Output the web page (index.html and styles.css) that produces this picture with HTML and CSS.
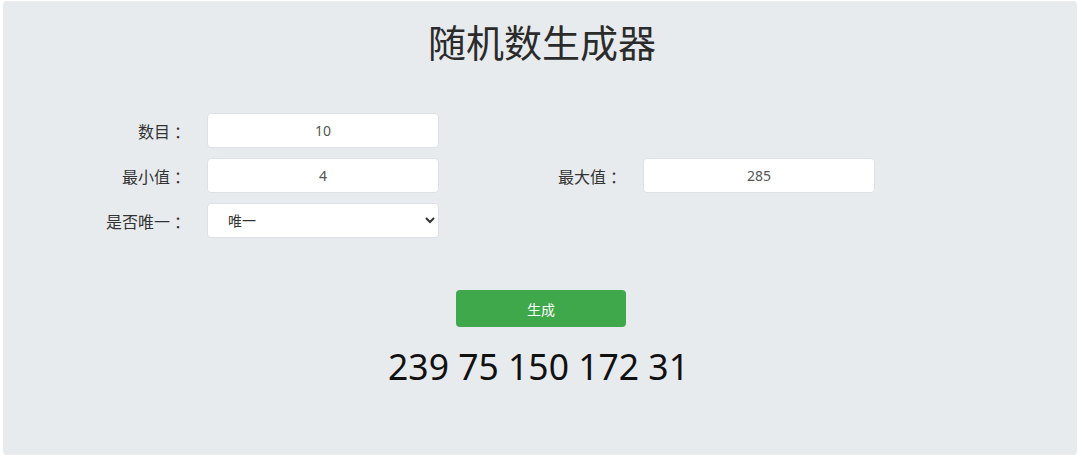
FILE: index.html
```html
<!DOCTYPE html>
<html lang="zh">
<head>
<meta charset="utf-8">
<title>随机数生成器</title>
<link rel="stylesheet" href="styles.css">
</head>
<body>
<div class="panel">
  <h1 class="title">随机数生成器</h1>
  <div class="form">
    <label class="label">数目<span class="colon">：</span></label>
    <input class="field" type="text" value="10">
    <div class="empty"></div>
    <div class="empty"></div>

    <label class="label">最小值<span class="colon">：</span></label>
    <input class="field" type="text" value="4">
    <label class="label">最大值<span class="colon">：</span></label>
    <input class="field" type="text" value="285">

    <label class="label">是否唯一<span class="colon">：</span></label>
    <select class="field select">
      <option>唯一</option>
      <option>不唯一</option>
    </select>
  </div>
  <div class="actions">
    <button class="btn" type="button">生成</button>
  </div>
  <div class="result">239 75 150 172 31</div>
</div>
</body>
</html>
```

FILE: styles.css
```css
html, body {
  margin: 0;
  padding: 0;
  background: #ffffff;
}
body {
  font-family: "Noto Sans", "Noto Sans CJK SC", sans-serif;
  padding: 1px 3px 2px 3px;
}
.panel {
  background: #e8ebee;
  border-radius: 4px;
  height: 454px;
  box-sizing: border-box;
  padding-top: 16px;
}
.title {
  margin: 0;
  padding-left: 4px;
  font-size: 38px;
  line-height: 48px;
  font-weight: 400;
  color: #2b2b2b;
  text-align: center;
  font-family: "Noto Sans CJK SC", sans-serif;
}
.form {
  margin-top: 48px;
  display: grid;
  grid-template-columns: 204px 232px 204px 232px;
  grid-auto-rows: 35px;
  row-gap: 10px;
}
.label {
  align-self: center;
  text-align: right;
  padding-right: 17px;
  font-size: 16px;
  color: #333;
  font-family: "Noto Sans CJK SC", sans-serif;
}
.colon {
  margin-left: 4px;
}
.field {
  box-sizing: border-box;
  width: 232px;
  height: 35px;
  border: 1px solid #dde1e5;
  border-radius: 4px;
  background: #fff;
  font-size: 14px;
  color: #555;
  text-align: center;
  font-family: "Noto Sans", "Noto Sans CJK SC", sans-serif;
  outline: none;
  padding: 0 8px;
}
.select {
  text-align: left;
  padding-left: 16px;
  color: #333;
}
.actions {
  margin-top: 52px;
  padding-left: 2px;
  display: flex;
  justify-content: center;
}
.btn {
  width: 170px;
  height: 37px;
  border: none;
  border-radius: 4px;
  background: #3ea84b;
  color: #fff;
  font-size: 14px;
  font-family: "Noto Sans CJK SC", sans-serif;
}
.result {
  margin-top: 17px;
  text-align: center;
  font-size: 35.5px;
  line-height: 44px;
  color: #111;
  padding-right: 3px;
}
```
